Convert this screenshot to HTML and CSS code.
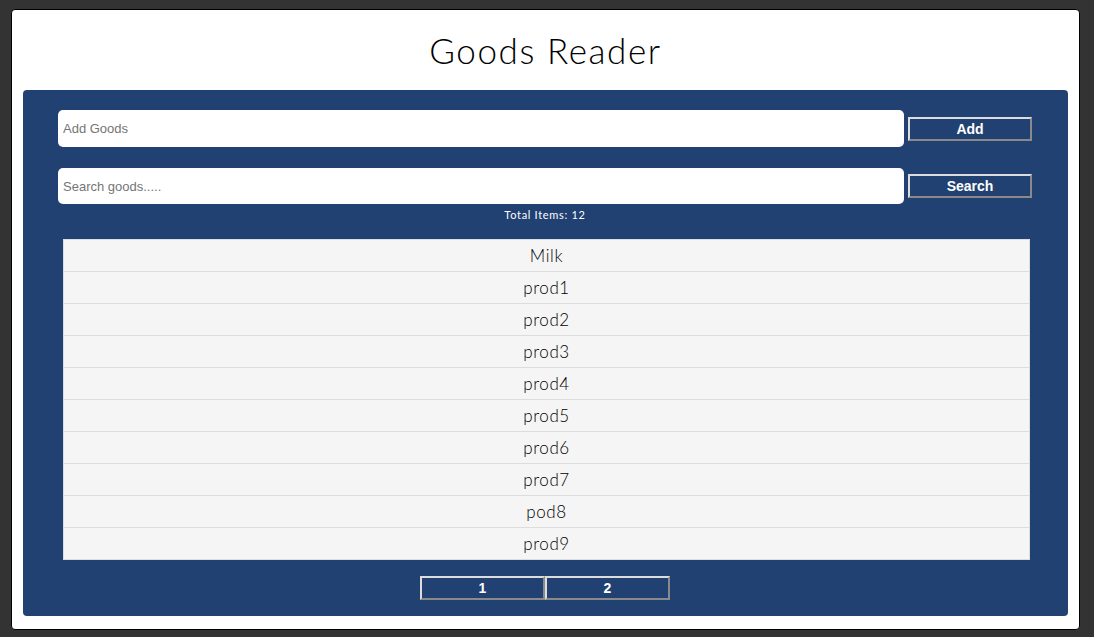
FILE: index.html
```html
<!DOCTYPE html>
<html>
<head>
<meta charset="utf-8">
<title>Goods Reader</title>
<link rel="stylesheet" href="styles.css">
</head>
<body>
<div class="card">
  <h1 class="title">Goods Reader</h1>
  <div class="panel">
    <div class="form-row">
      <input class="field" type="text" placeholder="Add Goods">
      <button class="btn">Add</button>
    </div>
    <div class="form-row second">
      <input class="field" type="text" placeholder="Search goods.....">
      <button class="btn">Search</button>
    </div>
    <div class="total">Total Items: 12</div>
    <ul class="list">
      <li class="item">Milk</li>
      <li class="item">prod1</li>
      <li class="item">prod2</li>
      <li class="item">prod3</li>
      <li class="item">prod4</li>
      <li class="item">prod5</li>
      <li class="item">prod6</li>
      <li class="item">prod7</li>
      <li class="item">pod8</li>
      <li class="item">prod9</li>
    </ul>
    <div class="pager">
      <button class="btn page">1</button>
      <button class="btn page">2</button>
    </div>
  </div>
</div>
</body>
</html>
```

FILE: styles.css
```css
html, body {
  margin: 0;
  padding: 0;
  background: #333333;
}
body {
  padding: 9px 14px 7px 11px;
}
.card {
  background: #ffffff;
  border: 1px solid #000000;
  border-radius: 4px;
  padding: 0 11px 13px 11px;
}
.title {
  margin: 0;
  height: 80px;
  display: flex;
  align-items: center;
  justify-content: center;
  font-family: Lato, "Noto Sans", sans-serif;
  font-weight: 300;
  font-size: 35px;
  letter-spacing: 1.6px;
  color: #000000;
}
.panel {
  background: #214172;
  border-radius: 4px;
  padding: 20px 36px 16px 35px;
}
.form-row {
  display: flex;
  align-items: center;
  gap: 4px;
}
.form-row.second {
  margin-top: 21px;
}
.field {
  flex: 1;
  height: 37px;
  box-sizing: border-box;
  border: none;
  border-radius: 5px;
  padding: 0 5px;
  font-family: "Liberation Sans", Arial, sans-serif;
  font-size: 13px;
  background: #ffffff;
  outline: none;
}
.form-row.second .field {
  height: 36px;
}
.field::placeholder {
  color: #757575;
}
.btn {
  width: 124px;
  height: 24px;
  box-sizing: border-box;
  background: #214172;
  color: #ffffff;
  border: 2px solid;
  border-color: #dcdcdc #8a8a8a #8a8a8a #dcdcdc;
  font-family: "Liberation Sans", Arial, sans-serif;
  font-weight: bold;
  font-size: 14px;
  padding: 0;
  cursor: pointer;
}
.total {
  margin-top: 4px;
  line-height: 14px;
  text-align: center;
  color: #ffffff;
  font-family: Lato, "Noto Sans", sans-serif;
  font-size: 11px;
  letter-spacing: 0.7px;
}
.list {
  list-style: none;
  margin: 17px 2px 0 5px;
  padding: 0;
  border-left: 1px solid #dddddd;
  border-right: 1px solid #dddddd;
  border-bottom: 1px solid #dddddd;
}
.item {
  background: #f5f5f5;
  border-top: 1px solid #dddddd;
  height: 31px;
  line-height: 31px;
  text-align: center;
  font-family: Lato, "Noto Sans", sans-serif;
  font-weight: 300;
  font-size: 17px;
  letter-spacing: 0.6px;
  color: #000000;
}
.pager {
  margin-top: 16px;
  display: flex;
  justify-content: center;
}
.page {
  width: 125px;
}
```
